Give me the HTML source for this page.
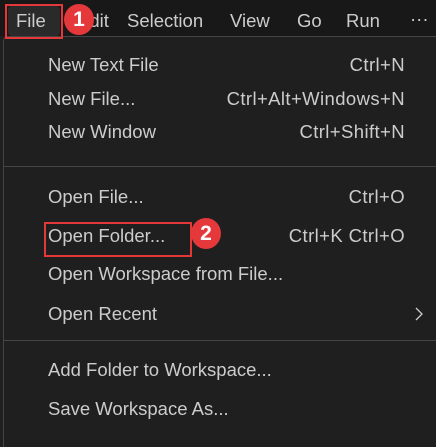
<html><head><style>
body{margin:0;width:436px;height:434px;background:#1f1f1f;overflow:hidden;position:relative;font-family:"Liberation Sans",sans-serif;color:#cccccc;font-size:18.5px}
.bar{position:absolute;left:0;top:0;width:436px;height:36px;background:#181818}
.t{position:absolute;white-space:nowrap;line-height:20px}
.menu{position:absolute;left:3px;top:36px;width:440px;height:410px;background:#1f1f1f;border-left:1px solid #454545;border-top:1px solid #454545;border-radius:5px 0 0 0}
.sep{position:absolute;left:4px;width:432px;height:1px;background:#454545}
.r{right:31px;text-align:right;letter-spacing:0.4px}
.box{position:absolute;border:2px solid #e5383b}
.b{position:absolute;border-radius:50%;background:#e5383b;color:#fff;font-weight:bold;font-size:21px;text-align:center}
</style></head><body>
<div class="bar"></div>
<div style="position:absolute;left:8px;top:6px;width:52px;height:30px;background:#2a2a2a;border-radius:4px"></div>
<div class="t" style="left:16px;top:11px">File</div>
<div class="t" style="left:77px;top:11px">Edit</div>
<div class="t" style="left:127px;top:11px">Selection</div>
<div class="t" style="left:230px;top:11px">View</div>
<div class="t" style="left:297px;top:11px">Go</div>
<div class="t" style="left:346px;top:11px">Run</div>
<div class="t" style="left:410px;top:9px">···</div>
<div class="menu"></div>
<div class="t" style="left:48px;top:55px">New Text File</div><div class="t r" style="top:55px">Ctrl+N</div>
<div class="t" style="left:48px;top:89px">New File...</div><div class="t r" style="top:89px">Ctrl+Alt+Windows+N</div>
<div class="t" style="left:48px;top:122px">New Window</div><div class="t r" style="top:122px">Ctrl+Shift+N</div>
<div class="sep" style="top:166px"></div>
<div class="t" style="left:48px;top:187px">Open File...</div><div class="t r" style="top:187px">Ctrl+O</div>
<div class="t" style="left:48px;top:226px">Open Folder...</div><div class="t r" style="top:226px">Ctrl+K Ctrl+O</div>
<div class="t" style="left:48px;top:264px">Open Workspace from File...</div>
<div class="t" style="left:48px;top:304px">Open Recent</div>
<svg style="position:absolute;left:414px;top:305px" width="10" height="18"><path d="M2 3l6 6-6 6" stroke="#ccc" fill="none" stroke-width="1.3"/></svg>
<div class="sep" style="top:340px"></div>
<div class="t" style="left:48px;top:360px">Add Folder to Workspace...</div>
<div class="t" style="left:48px;top:399px">Save Workspace As...</div>
<div class="box" style="left:5px;top:4px;width:54px;height:31px"></div>
<div class="b" style="left:64px;top:4px;width:30px;height:31px;line-height:31px">1</div>
<div class="box" style="left:44px;top:222px;width:144px;height:31px"></div>
<div class="b" style="left:191px;top:218px;width:30px;height:31px;line-height:31px">2</div>
</body></html>
